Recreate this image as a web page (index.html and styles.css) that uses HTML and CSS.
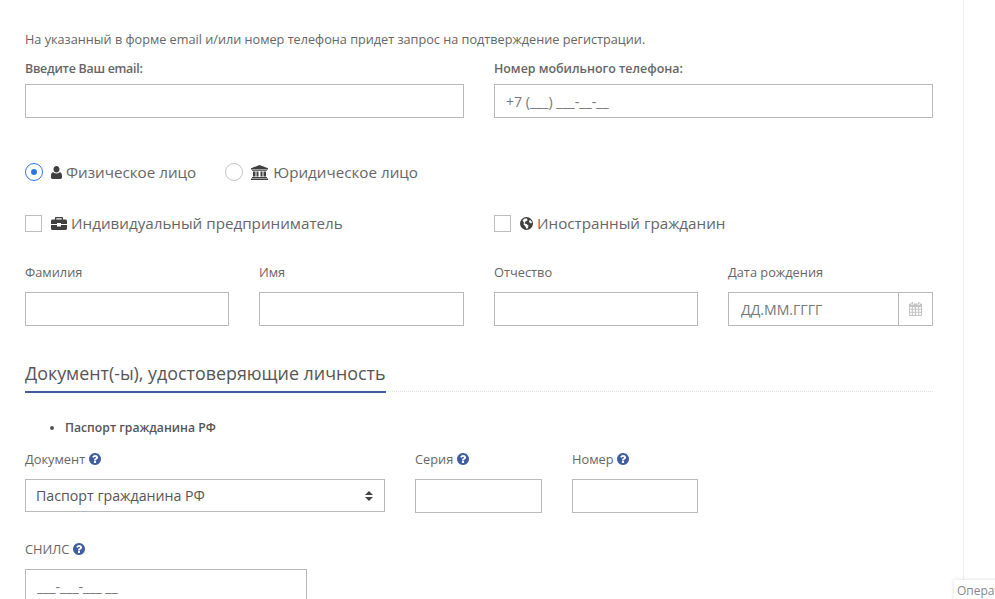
FILE: index.html
```html
<!DOCTYPE html>
<html lang="ru">
<head>
<meta charset="utf-8">
<title>Регистрация</title>
<link rel="stylesheet" href="styles.css">
</head>
<body>
<svg class="defs" width="0" height="0" aria-hidden="true">
  <symbol id="q" viewBox="128 128 1536 1536"><path d="M1024 1376v-192q0-14-9-23t-23-9h-192q-14 0-23 9t-9 23v192q0 14 9 23t23 9h192q14 0 23-9t9-23zm256-672q0-88-55.500-163t-138.500-116-170-41q-243 0-371 213-15 24 8 42l132 100q7 6 19 6 16 0 25-12 53-68 86-92 34-24 86-24 48 0 85.500 26t37.500 59q0 38-20 61t-68 45q-63 28-115.500 86.500t-52.500 125.500v36q0 14 9 23t23 9h192q14 0 23-9t9-23q0-19 21.500-49.500t54.500-49.500q32-18 49-28.500t46-35 44.500-48 28-60.500 12.500-81zm384 192q0 209-103 385.500t-279.500 279.500-385.500 103-385.500-103-279.500-279.500-103-385.500 103-385.500 279.500-279.500 385.500-103 385.500 103 279.500 279.500 103 385.500z"/></symbol>
</svg>
<main class="page">
  <p class="intro">На указанный в форме email и/или номер телефона придет запрос на подтверждение регистрации.</p>
  <div class="row-two">
    <div class="field">
      <label class="label-strong label-email" for="email">Введите Ваш email:</label>
      <input class="input" id="email" type="text">
    </div>
    <div class="field">
      <label class="label-strong" for="phone">Номер мобильного телефона:</label>
      <input class="input" id="phone" type="text" placeholder="+7 (___) ___-__-__">
    </div>
  </div>

  <div class="radios">
    <span class="choice choice-first">
      <span class="radio radio-on"></span>
      <svg class="ico ico-user" viewBox="0 0 11 13"><path d="M5.500 0C7.300 0 8.500 1.400 8.500 3.200S7.300 6.500 5.500 6.500 2.500 5 2.500 3.200 3.700 0 5.500 0zM2.300 6.200C3.200 7 4.300 7.400 5.500 7.400S7.800 7 8.700 6.200C10.200 6.300 11 7.700 11 9.900V11.300C11 12.300 10.300 13 9.300 13H1.700C.7 13 0 12.300 0 11.300V9.900C0 7.700.8 6.300 2.300 6.200z"/></svg>
      Физическое лицо
    </span>
    <span class="choice">
      <span class="radio"></span>
      <svg class="ico ico-bank" viewBox="0 0 17 15"><path d="M8.500 0L17 3.300V4.500H0V3.300zM1 5H16V5.800H1zM2 6.500H4.500V11.500H2zM5.500 6.500H7.500V11.500H5.500zM9.500 6.500H11.500V11.500H9.500zM12.500 6.500H15V11.500H12.500zM1 12H16V13H1zM0 13.500H17V15H0z"/></svg>
      Юридическое лицо
    </span>
  </div>

  <div class="row-two checks">
    <span class="choice">
      <span class="check"></span>
      <svg class="ico ico-case" viewBox="0 0 16 13"><path d="M5 0H11C11.600 0 12 .4 12 1V2.500H14.500C15.300 2.500 16 3.200 16 4V7H10V6H6V7H0V4C0 3.200.7 2.500 1.500 2.500H4V1C4 .4 4.400 0 5 0zM5.300 1.300V2.500H10.700V1.300zM0 8H6V9.500H10V8H16V11.500C16 12.300 15.300 13 14.500 13H1.500C.7 13 0 12.300 0 11.500z"/></svg>
      Индивидуальный предприниматель
    </span>
    <span class="choice">
      <span class="check"></span>
      <svg class="ico ico-globe" viewBox="0 0 13 13"><path fill-rule="evenodd" d="M6.500 0a6.500 6.500 0 1 1 0 13a6.500 6.500 0 0 1 0-13zM2.500 3.500L4 5.500 3.500 7.500 5.500 9.500 6.500 12 8 11 8.500 8.500 6.500 7 4.500 6.500 5.500 4.500 7.500 3.500 7 1.500 4.500 1.500zM9.500 3L9 5 11 6.500 12 5.500 11 3.500z"/></svg>
      Иностранный гражданин
    </span>
  </div>

  <div class="row-four">
    <div class="field"><label class="label" for="f1">Фамилия</label><input class="input" id="f1" type="text"></div>
    <div class="field"><label class="label" for="f2">Имя</label><input class="input" id="f2" type="text"></div>
    <div class="field"><label class="label" for="f3">Отчество</label><input class="input" id="f3" type="text"></div>
    <div class="field">
      <label class="label" for="f4">Дата рождения</label>
      <div class="date">
        <input class="date-input" id="f4" type="text" placeholder="ДД.ММ.ГГГГ">
        <span class="date-addon">
          <svg class="ico-cal" viewBox="0 0 13 14"><path fill-rule="evenodd" d="M2.500 0H4V2.500H2.500zM9 0H10.500V2.500H9zM1 1.500H2V3H4.500V1.500H8.500V3H11V1.500H12C12.600 1.500 13 1.900 13 2.500V13C13 13.600 12.600 14 12 14H1C.4 14 0 13.600 0 13V2.500C0 1.900.4 1.500 1 1.500zM1 5V6.800H2.800V5zM3.800 5V6.800H5.900V5zM7 5V6.800H9.200V5zM10.200 5V6.800H12V5zM1 7.800V9.800H2.800V7.800zM3.800 7.800V9.800H5.900V7.800zM7 7.800V9.800H9.200V7.800zM10.200 7.800V9.800H12V7.800zM1 10.800V13H2.800V10.800zM3.800 10.800V13H5.900V10.800zM7 10.800V13H9.200V10.800zM10.200 10.800V13H12V10.800z"/></svg>
        </span>
      </div>
    </div>
  </div>

  <div class="section">
    <h2 class="section-title">Документ(-ы), удостоверяющие личность</h2>
  </div>

  <ul class="doc-list"><li>Паспорт гражданина РФ</li></ul>

  <div class="row-doc">
    <div class="field">
      <label class="label" for="d1">Документ <svg class="q"><use href="#q"/></svg></label>
      <div class="select-wrap">
        <select class="select" id="d1"><option>Паспорт гражданина РФ</option></select>
        <svg class="select-arrows" viewBox="0 0 8 10"><path d="M4 0L8 4H0zM0 6H8L4 10z"/></svg>
      </div>
    </div>
    <div class="field">
      <label class="label" for="d2">Серия <svg class="q"><use href="#q"/></svg></label>
      <input class="input" id="d2" type="text">
    </div>
    <div class="field">
      <label class="label" for="d3">Номер <svg class="q"><use href="#q"/></svg></label>
      <input class="input" id="d3" type="text">
    </div>
  </div>

  <div class="field field-snils">
    <label class="label" for="s1">СНИЛС <svg class="q"><use href="#q"/></svg></label>
    <input class="input" id="s1" type="text" placeholder="___-___-___ __">
  </div>
</main>
<div class="operator">Оператор</div>
</body>
</html>
```

FILE: styles.css
```css
* { box-sizing: border-box; }
html, body { margin: 0; height: 599px; overflow: hidden; background: #fff; }
body { font-family: "Open Sans", sans-serif; color: #666; font-size: 13px; }
.defs { position: absolute; }
.page {
  width: 964px;
  height: 599px;
  padding: 30px 30px 0 25px;
  border-right: 1px solid #eee;
  overflow: hidden;
}
.intro { margin: 0 0 12px; font-size: 12.68px; line-height: 18px; color: #666; }
.row-two { display: grid; grid-template-columns: 439px 439px; column-gap: 30px; }
.field { display: flex; flex-direction: column; min-width: 0; }
.label-strong { font-weight: 600; font-size: 12.4px; line-height: 18px; margin-bottom: 6px; color: #666; }
.label-email { letter-spacing: -0.25px; }
.label { font-size: 12.8px; line-height: 18px; margin-bottom: 11px; color: #666; }
.input {
  display: block;
  width: 100%;
  height: 34px;
  border: 1px solid #b9b9b9;
  background: #fff;
  border-radius: 0;
  padding: 0 11px;
  font: 14.1px "Open Sans", sans-serif;
  color: #666;
  outline: none;
}
.input::placeholder, .date-input::placeholder { color: #777; opacity: 1; }
.radios { display: flex; margin-top: 45px; height: 18px; align-items: center; }
.choice { display: inline-flex; align-items: center; font-size: 15.2px; line-height: 18px; color: #666; white-space: nowrap; }
.choice-first { margin-right: 29px; }
.radio {
  width: 18px; height: 18px; border: 1px solid #c4c4c4; border-radius: 50%;
  margin-right: 8px; background: #fff; display: inline-block; flex: none; position: relative;
}
.radio-on { border-color: #2f76e0; }
.radio-on::after {
  content: ""; position: absolute; left: 5px; top: 5px; width: 6px; height: 6px;
  border-radius: 50%; background: #2f76e0;
}
.check { width: 17px; height: 17px; border: 1px solid #bdbdbd; margin-right: 9px; flex: none; background: #fff; }
.ico { fill: #3f3f3f; flex: none; margin-right: 4px; }
.ico-user { width: 11px; height: 13px; }
.ico-bank { width: 17px; height: 15px; margin-right: 5px; }
.ico-case { width: 16px; height: 13px; margin-right: 4px; }
.ico-globe { width: 13px; height: 13px; }
.checks { margin-top: 33px; height: 18px; align-items: center; }
.row-four { display: grid; grid-template-columns: 204px 205px 204px 205px; column-gap: 30px; margin-top: 31px; }
.date { display: flex; height: 34px; border: 1px solid #b9b9b9; }
.date-input {
  flex: 1; min-width: 0; border: 0; outline: none; padding: 0 12px;
  font: 14.1px "Open Sans", sans-serif; color: #666; background: #fff;
}
.date-addon { width: 34px; flex: none; border-left: 1px solid #b9b9b9; display: flex; align-items: center; justify-content: center; }
.ico-cal { width: 13px; height: 14px; fill: #c4c4c4; }
.section { margin-top: 31px; border-bottom: 1px dotted #e2e2e2; height: 35px; }
.section-title {
  display: inline-block;
  margin: 0; font-weight: 400; font-size: 17.85px; line-height: 24px; color: #555;
  height: 36px; padding: 4px 1px 0 0; border-bottom: 2px solid #3f5d9f;
}
.doc-list { margin: 27px 0 0; padding: 0 0 0 40px; font-size: 12.2px; font-weight: 600; line-height: 18px; color: #555; }
.row-doc { display: grid; grid-template-columns: 360px 127px 126px; column-gap: 30px; margin-top: 13px; }
.q { width: 12px; height: 12px; fill: #3f5d9f; vertical-align: -1px; }
.select-wrap { position: relative; }
.select {
  appearance: none; -webkit-appearance: none;
  display: block; width: 100%; height: 33px; border: 1px solid #b9b9b9; border-radius: 0;
  background: #fff; padding: 0 10px; font: 14.2px "Open Sans", sans-serif; color: #555; outline: none;
}
.select-arrows { position: absolute; right: 12px; top: 12px; width: 8px; height: 10px; fill: #444; pointer-events: none; }
.field-snils { margin-top: 27px; width: 282px; }
.operator {
  position: absolute; left: 954px; top: 580px; width: 60px; height: 24px; background: #fff;
  box-shadow: 0 0 4px rgba(0,0,0,.15); padding: 2px 0 0 3px; font-size: 12px; line-height: 18px; color: #888;
  white-space: nowrap; overflow: hidden;
}
```
